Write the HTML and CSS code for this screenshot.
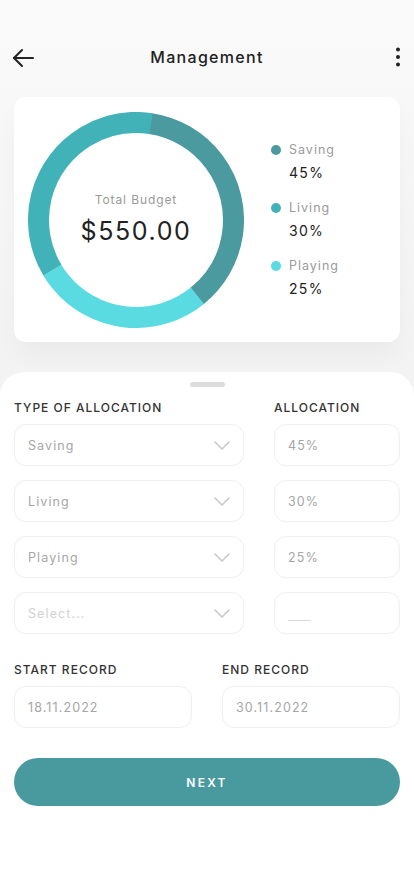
FILE: index.html
```html
<!DOCTYPE html>
<html lang="en">
<head>
<meta charset="utf-8">
<meta name="viewport" content="width=device-width, initial-scale=1">
<title>Management</title>
<link rel="stylesheet" href="styles.css">
</head>
<body>
<div class="app">
  <header class="topbar">
    <svg class="icon-back" width="22" height="20" viewBox="0 0 22 20" fill="none" stroke="#222" stroke-width="2" stroke-linecap="round" stroke-linejoin="round">
      <path d="M21 10H2"/><path d="M10 2L2 10l8 8"/>
    </svg>
    <h1 class="title">Management</h1>
    <svg class="icon-more" width="6" height="20" viewBox="0 0 6 20" fill="#222">
      <circle cx="3" cy="2.5" r="2"/><circle cx="3" cy="10" r="2"/><circle cx="3" cy="17.5" r="2"/>
    </svg>
  </header>

  <section class="card">
    <div class="donut">
      <svg width="216" height="216" viewBox="0 0 216 216">
        <g fill="none" stroke-width="21">
          <circle cx="108" cy="108" r="97.5" stroke="#4a9a9f" stroke-dasharray="225.5 1000" transform="rotate(-81.5 108 108)"/>
          <circle cx="108" cy="108" r="97.5" stroke="#5adbe2" stroke-dasharray="166.8 1000" transform="rotate(51 108 108)"/>
          <circle cx="108" cy="108" r="97.5" stroke="#42b2b9" stroke-dasharray="220.6 1000" transform="rotate(149 108 108)"/>
        </g>
      </svg>
      <div class="donut-center">
        <div class="total-label">Total Budget</div>
        <div class="total-value">$550.00</div>
      </div>
    </div>
    <ul class="legend">
      <li class="legend-item">
        <div class="legend-name"><span class="dot dot-saving"></span>Saving</div>
        <div class="legend-pct">45%</div>
      </li>
      <li class="legend-item">
        <div class="legend-name"><span class="dot dot-living"></span>Living</div>
        <div class="legend-pct">30%</div>
      </li>
      <li class="legend-item">
        <div class="legend-name"><span class="dot dot-playing"></span>Playing</div>
        <div class="legend-pct">25%</div>
      </li>
    </ul>
  </section>

  <section class="sheet">
    <div class="handle"></div>
    <div class="alloc-grid">
      <div class="label">TYPE OF ALLOCATION</div>
      <div class="label">ALLOCATION</div>

      <div class="field select"><span class="val">Saving</span><svg class="chev" width="16" height="9" viewBox="0 0 16 9" fill="none" stroke="#c8c8c8" stroke-width="1.6" stroke-linecap="round" stroke-linejoin="round"><path d="M1 1l7 7 7-7"/></svg></div>
      <div class="field"><span class="val">45%</span></div>

      <div class="field select"><span class="val">Living</span><svg class="chev" width="16" height="9" viewBox="0 0 16 9" fill="none" stroke="#c8c8c8" stroke-width="1.6" stroke-linecap="round" stroke-linejoin="round"><path d="M1 1l7 7 7-7"/></svg></div>
      <div class="field"><span class="val">30%</span></div>

      <div class="field select"><span class="val">Playing</span><svg class="chev" width="16" height="9" viewBox="0 0 16 9" fill="none" stroke="#c8c8c8" stroke-width="1.6" stroke-linecap="round" stroke-linejoin="round"><path d="M1 1l7 7 7-7"/></svg></div>
      <div class="field"><span class="val">25%</span></div>

      <div class="field select"><span class="val placeholder">Select...</span><svg class="chev" width="16" height="9" viewBox="0 0 16 9" fill="none" stroke="#c8c8c8" stroke-width="1.6" stroke-linecap="round" stroke-linejoin="round"><path d="M1 1l7 7 7-7"/></svg></div>
      <div class="field"><span class="blank"></span></div>
    </div>

    <div class="date-grid">
      <div class="label">START RECORD</div>
      <div class="label">END RECORD</div>
      <div class="field"><span class="val">18.11.2022</span></div>
      <div class="field"><span class="val">30.11.2022</span></div>
    </div>

    <button class="next-btn">NEXT</button>
  </section>
</div>
</body>
</html>
```

FILE: styles.css
```css
* { box-sizing: border-box; }

html, body {
  margin: 0;
  padding: 0;
}

body {
  background: #f5f5f5;
  font-family: Inter, "Noto Sans", sans-serif;
  color: #222;
}

.app {
  width: 414px;
  min-height: 896px;
  display: flex;
  flex-direction: column;
  background: linear-gradient(#fafafa, #f3f3f3 360px);
}

.topbar {
  height: 42px;
  margin-top: 36px;
  padding: 0 12px;
  display: grid;
  grid-template-columns: 1fr auto 1fr;
  align-items: center;
}

.icon-back { display: block; margin-top: 1px; justify-self: start; }
.icon-more { display: block; margin-right: 1px; justify-self: end; }

.title {
  margin: 0;
  font-size: 16px;
  font-weight: 500;
  letter-spacing: 1.3px;
  color: #222;
}

.card {
  margin: 19px 14px 0;
  height: 245px;
  background: #fff;
  border-radius: 12px;
  padding: 14px;
  display: flex;
  align-items: center;
  box-shadow: 0 14px 24px rgba(0, 0, 0, 0.035);
}

.donut {
  position: relative;
  width: 216px;
  height: 216px;
  flex: none;
}

.donut svg { display: block; }

.donut-center {
  position: absolute;
  inset: 0;
  display: flex;
  flex-direction: column;
  align-items: center;
  justify-content: center;
}

.total-label {
  font-size: 12px;
  color: #9a9a9a;
  letter-spacing: 0.9px;
  line-height: 16px;
}

.total-value {
  font-size: 25px;
  color: #222;
  letter-spacing: 1.6px;
  line-height: 32px;
  margin-top: 7px;
}

.legend {
  list-style: none;
  margin: 0 0 0 27px;
  padding: 0;
  display: flex;
  flex-direction: column;
  gap: 17px;
}

.legend-name {
  display: flex;
  align-items: center;
  font-size: 12.5px;
  color: #9a9a9a;
  letter-spacing: 1px;
  line-height: 18px;
}

.dot {
  width: 10px;
  height: 10px;
  border-radius: 50%;
  margin-right: 8px;
}

.dot-saving { background: #4a9a9f; }
.dot-living { background: #42b2b9; }
.dot-playing { background: #5adbe2; }

.legend-pct {
  margin-top: 5px;
  padding-left: 18px;
  font-size: 14px;
  color: #222;
  letter-spacing: 1.3px;
  line-height: 18px;
}

.sheet {
  flex: 1;
  margin-top: 30px;
  background: #fff;
  border-radius: 24px 24px 0 0;
  padding: 10px 14px 40px;
  display: flex;
  flex-direction: column;
}

.handle {
  width: 35px;
  height: 5px;
  border-radius: 3px;
  background: #dcdcdc;
  align-self: center;
}

.label {
  font-size: 12px;
  font-weight: 500;
  letter-spacing: 1px;
  color: #333;
  line-height: 16px;
  margin-bottom: -6px;
}

.alloc-grid {
  margin-top: 13px;
  display: grid;
  grid-template-columns: 230px 126px;
  column-gap: 30px;
  row-gap: 14px;
}

.date-grid {
  margin-top: 28px;
  display: grid;
  grid-template-columns: 178px 178px;
  column-gap: 30px;
  row-gap: 14px;
}

.field {
  height: 42px;
  border: 1px solid #efefef;
  border-radius: 12px;
  padding: 0 13px;
  display: flex;
  align-items: center;
  justify-content: space-between;
}

.val {
  font-size: 12.5px;
  color: #a6a6a6;
  letter-spacing: 1.1px;
}

.val.placeholder { color: #d2d2d2; }

.blank {
  display: block;
  width: 23px;
  height: 1px;
  background: #dcdcdc;
  margin-top: 14px;
}

.chev { display: block; margin-top: 1px; }

.next-btn {
  margin-top: 30px;
  height: 48px;
  border: none;
  border-radius: 24px;
  background: #489a9f;
  color: #fff;
  font-family: Inter, "Noto Sans", sans-serif;
  font-size: 12px;
  font-weight: 600;
  letter-spacing: 2.2px;
  padding: 0;
}
```
